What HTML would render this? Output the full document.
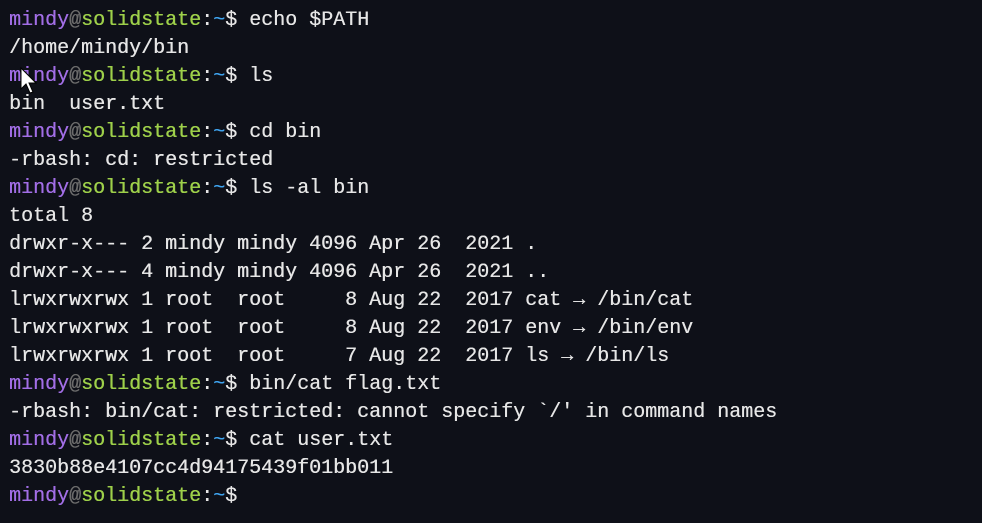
<!DOCTYPE html><html><head><style>
body{margin:0;background:#0e1018;width:982px;height:523px;overflow:hidden}
pre{margin:0;padding:7px 0 0 9px;font:20px/28px "Liberation Mono",monospace;color:#e6e6e6;letter-spacing:0;text-shadow:0.3px 0 0 currentColor}
.u{color:#a26ee6}.a{color:#6b6b6b}.h{color:#9ed04a}.t{color:#3fa3ee}
</style></head><body><pre><span class="u">mindy</span><span class="a">@</span><span class="h">solidstate</span>:<span class="t">~</span>$ echo $PATH
/home/mindy/bin
<span class="u">mindy</span><span class="a">@</span><span class="h">solidstate</span>:<span class="t">~</span>$ ls
bin  user.txt
<span class="u">mindy</span><span class="a">@</span><span class="h">solidstate</span>:<span class="t">~</span>$ cd bin
-rbash: cd: restricted
<span class="u">mindy</span><span class="a">@</span><span class="h">solidstate</span>:<span class="t">~</span>$ ls -al bin
total 8
drwxr-x--- 2 mindy mindy 4096 Apr 26  2021 .
drwxr-x--- 4 mindy mindy 4096 Apr 26  2021 ..
lrwxrwxrwx 1 root  root     8 Aug 22  2017 cat → /bin/cat
lrwxrwxrwx 1 root  root     8 Aug 22  2017 env → /bin/env
lrwxrwxrwx 1 root  root     7 Aug 22  2017 ls → /bin/ls
<span class="u">mindy</span><span class="a">@</span><span class="h">solidstate</span>:<span class="t">~</span>$ bin/cat flag.txt
-rbash: bin/cat: restricted: cannot specify `/' in command names
<span class="u">mindy</span><span class="a">@</span><span class="h">solidstate</span>:<span class="t">~</span>$ cat user.txt
3830b88e4107cc4d94175439f01bb011
<span class="u">mindy</span><span class="a">@</span><span class="h">solidstate</span>:<span class="t">~</span>$</pre>
<svg style="position:absolute;left:20px;top:67px" width="18" height="28" viewBox="0 0 18 28"><path d="M1 1 L1 22 L6 17 L10 26 L13 25 L9 16 L16 16 Z" fill="#fff" stroke="#000" stroke-width="1"/></svg>
</body></html>
